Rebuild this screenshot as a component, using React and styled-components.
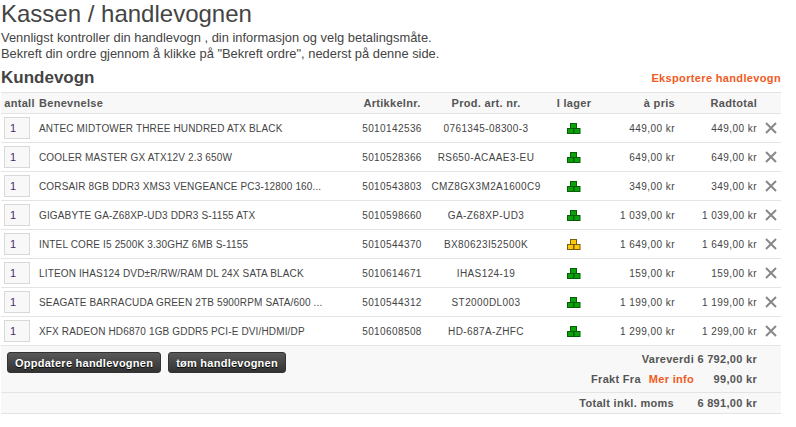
import React from 'react';
import styled, { createGlobalStyle } from 'styled-components';

const GlobalStyle = createGlobalStyle`
	html, body {
		margin: 0;
		padding: 0;
		background: #fff;
		font-family: 'Liberation Sans', Arial, sans-serif;
		color: #444;
	}
`;

const Page = styled.div`
	width: 780px;
	padding-left: 1px;
`;

const Title = styled.h1`
	margin: 0;
	font-size: 24px;
	line-height: 28px;
	font-weight: 400;
	color: #444;
`;

const Intro = styled.p`
	margin: 2px 0 0;
	font-size: 12.9px;
	line-height: 16px;
	color: #444;
`;

const CartHead = styled.div`
	display: flex;
	justify-content: space-between;
	align-items: center;
	box-sizing: border-box;
	height: 27px;
	margin-top: 3px;
	padding-bottom: 2px;
`;

const CartTitle = styled.h2`
	margin: 0;
	font-size: 17px;
	font-weight: 700;
	color: #444;
`;

const ExportLink = styled.a`
	font-size: 11px;
	font-weight: 700;
	letter-spacing: 0.35px;
	color: #f15a22;
`;

const columns = '37px 321px 66px 122px 54px 74px 82px 1fr';

const HeadRow = styled.div`
	display: grid;
	grid-template-columns: ${columns};
	align-items: center;
	height: 20px;
	background: #f8f8f8;
	border-top: 1px solid #e4e4e4;
	border-bottom: 1px solid #e4e4e4;
	font-size: 11px;
	font-weight: 700;
	letter-spacing: 0.3px;
	color: #555;
`;

const Row = styled.div`
	display: grid;
	grid-template-columns: ${columns};
	align-items: center;
	height: 28px;
	border-bottom: 1px solid #e4e4e4;
	font-size: 10px;
	color: #444;
`;

const Cell = styled.div`
	padding-left: ${p => (p.$align === 'left' ? '1px' : '0')};
	text-align: ${p => p.$align || 'center'};
	white-space: nowrap;
	overflow: hidden;
`;

const NameCell = styled(Cell)`
	letter-spacing: 0.15px;
`;

const CodeCell = styled(Cell)`
	letter-spacing: 0.4px;
`;

const MoneyCell = styled(Cell)`
	text-align: right;
`;

const PriceCell = styled(MoneyCell)`
	letter-spacing: 0.45px;
`;

const Qty = styled.div`
	width: 26px;
	height: 22px;
	margin-left: 3px;
	padding-left: 5px;
	box-sizing: border-box;
	line-height: 20px;
	font-size: 11px;
	background: #f8f8f8;
	border: 1px solid #d8d8d8;
	color: #4a2a6a;
`;

const Remove = styled.div`
	display: flex;
	justify-content: flex-end;
	padding-right: 4px;
`;

const Summary = styled.div`
	display: flex;
	justify-content: space-between;
	height: 46px;
	background: #f8f8f8;
	border-bottom: 1px solid #e4e4e4;
`;

const Buttons = styled.div`
	display: flex;
	align-items: flex-start;
	gap: 7px;
	padding: 6px 0 0 6px;
`;

const Button = styled.button`
	height: 21px;
	padding: 0 7px;
	border: 1px solid #333;
	border-radius: 3px;
	background: linear-gradient(#595959, #333);
	color: #fff;
	font-family: inherit;
	font-size: 11px;
	font-weight: 700;
	letter-spacing: 0.25px;
	text-shadow: 0 1px 1px #000;
`;

const Sums = styled.div`
	display: flex;
	flex-direction: column;
	gap: 6px;
	padding: 6px 24px 0 0;
	font-size: 11px;
	font-weight: 700;
	letter-spacing: 0.3px;
	color: #555;
`;

const SumLine = styled.div`
	display: flex;
	justify-content: flex-end;
	align-items: center;
	height: 14px;
`;

const SumLabel = styled.span`
	margin-right: ${p => p.$gap || 0}px;
`;

const SumLink = styled.a`
	color: #f15a22;
`;

const SumValue = styled.span`
	width: 63px;
	text-align: right;
`;

const TotalRow = styled.div`
	display: flex;
	justify-content: flex-end;
	align-items: center;
	height: 20px;
	padding-right: 24px;
	background: #f8f8f8;
	border-bottom: 1px solid #e4e4e4;
	font-size: 11px;
	font-weight: 700;
	letter-spacing: 0.3px;
	color: #555;
`;

const TotalValue = styled.span`
	width: 83px;
	text-align: right;
`;

const Stock = ({ low }) => {
	const fill = low ? '#fdc70c' : '#0ca00c';
	const edge = low ? '#7a5c10' : '#056005';
	return (
		<svg width='14' height='11' viewBox='0 0 14 11' style={{ display: 'block', margin: '0 auto' }}>
			<rect x='3.5' y='0.5' width='6' height='5' fill={fill} stroke={edge} />
			<rect x='0.5' y='5.5' width='6' height='5' fill={fill} stroke={edge} />
			<rect x='7' y='5.5' width='6' height='5' fill={fill} stroke={edge} />
		</svg>
	);
};

const CloseIcon = () => (
	<svg width='12' height='12' viewBox='0 0 12 12'>
		<path d='M1 1 L11 11 M11 1 L1 11' stroke='#888' strokeWidth='2' fill='none' />
	</svg>
);

const items = [
	['ANTEC MIDTOWER THREE HUNDRED ATX BLACK', '5010142536', '0761345-08300-3', '449,00 kr'],
	['COOLER MASTER GX ATX12V 2.3 650W', '5010528366', 'RS650-ACAAE3-EU', '649,00 kr'],
	['CORSAIR 8GB DDR3 XMS3 VENGEANCE PC3-12800 160...', '5010543803', 'CMZ8GX3M2A1600C9', '349,00 kr'],
	['GIGABYTE GA-Z68XP-UD3 DDR3 S-1155 ATX', '5010598660', 'GA-Z68XP-UD3', '1 039,00 kr'],
	['INTEL CORE I5 2500K 3.30GHZ 6MB S-1155', '5010544370', 'BX80623I52500K', '1 649,00 kr', true],
	['LITEON IHAS124 DVD±R/RW/RAM DL 24X SATA BLACK', '5010614671', 'IHAS124-19', '159,00 kr'],
	['SEAGATE BARRACUDA GREEN 2TB 5900RPM SATA/600 ...', '5010544312', 'ST2000DL003', '1 199,00 kr'],
	['XFX RADEON HD6870 1GB GDDR5 PCI-E DVI/HDMI/DP', '5010608508', 'HD-687A-ZHFC', '1 299,00 kr'],
];

const App = () => (
	<Page>
		<GlobalStyle />
		<Title>Kassen / handlevognen</Title>
		<Intro>
			Vennligst kontroller din handlevogn , din informasjon og velg betalingsmåte.
			<br />
			Bekreft din ordre gjennom å klikke på "Bekreft ordre", nederst på denne side.
		</Intro>
		<CartHead>
			<CartTitle>Kundevogn</CartTitle>
			<ExportLink>Eksportere handlevogn</ExportLink>
		</CartHead>
		<HeadRow>
			<Cell>antall</Cell>
			<Cell $align='left'>Benevnelse</Cell>
			<Cell>Artikkelnr.</Cell>
			<Cell>Prod. art. nr.</Cell>
			<Cell>I lager</Cell>
			<MoneyCell>à pris</MoneyCell>
			<MoneyCell>Radtotal</MoneyCell>
			<div />
		</HeadRow>
		{items.map(([name, nr, prod, price, low]) => (
			<Row key={nr}>
				<Qty>1</Qty>
				<NameCell $align='left'>{name}</NameCell>
				<CodeCell>{nr}</CodeCell>
				<CodeCell>{prod}</CodeCell>
				<Cell>
					<Stock low={low} />
				</Cell>
				<PriceCell>{price}</PriceCell>
				<PriceCell>{price}</PriceCell>
				<Remove>
					<CloseIcon />
				</Remove>
			</Row>
		))}
		<Summary>
			<Buttons>
				<Button>Oppdatere handlevognen</Button>
				<Button>tøm handlevognen</Button>
			</Buttons>
			<Sums>
				<SumLine>
					<SumLabel>Vareverdi</SumLabel>
					<SumValue>6 792,00 kr</SumValue>
				</SumLine>
				<SumLine>
					<SumLabel $gap={8}>Frakt Fra</SumLabel>
					<SumLink>Mer info</SumLink>
					<SumValue>99,00 kr</SumValue>
				</SumLine>
			</Sums>
		</Summary>
		<TotalRow>
			<span>Totalt inkl. moms</span>
			<TotalValue>6 891,00 kr</TotalValue>
		</TotalRow>
	</Page>
);

export default App;
